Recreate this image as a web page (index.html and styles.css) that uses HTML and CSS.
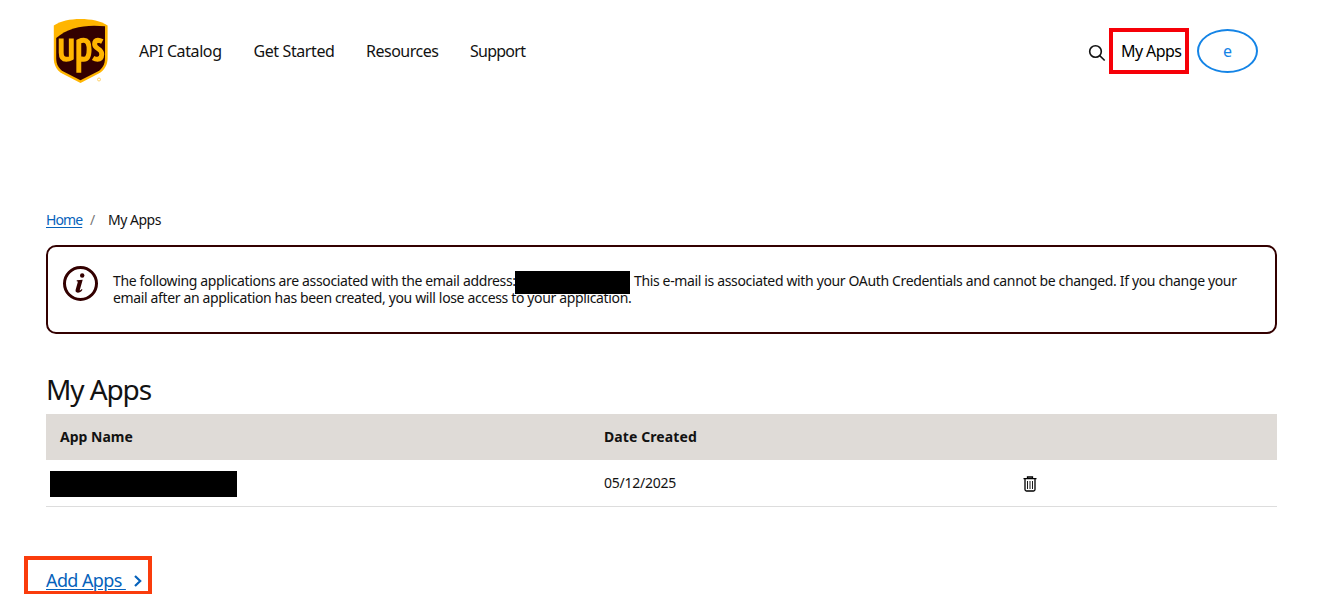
FILE: index.html
```html
<!DOCTYPE html>
<html lang="en">
<head>
<meta charset="utf-8">
<title>My Apps</title>
<link rel="stylesheet" href="styles.css">
</head>
<body>
<header class="topbar">
  <svg class="logo" width="56" height="66" viewBox="0 0 56 66" role="img" aria-label="UPS">
    <path fill="#ffb500" d="M27.500 1C17 1 7.500 3 0.800 7.500V40c0 7 2.600 12 8.400 15.600L27.500 65l18.200-9.400C51.500 52 54.600 47 54.600 40V7.500C48 3 38 1 27.500 1z"/>
    <path fill="#330000" d="M52 8.300C34 6.500 16 8.600 3.200 20V40c0 6.300 2.300 10.500 7.200 13.600L27.500 62.300l17.200-8.700C49.600 50.500 52 46.300 52 40z"/>
    <g fill="none" stroke="#ffb500" stroke-width="4.900" transform="translate(0.300 -2)">
      <path d="M7.900 22.500V36.500Q7.900 43.300 12.900 43.300Q16 43.300 18 42V22.500"/>
      <path d="M25.500 56.700V25.500Q28 24.300 30.500 24.300Q35.800 24.300 35.800 33.500Q35.800 43.300 30.500 43.300Q28 43.300 25.500 42"/>
      <path d="M49 25.500Q46.500 24.200 44.700 24.200Q41.300 24.500 41.300 28C41.300 33.500 48.500 32 48.500 38.200Q48.300 43.300 44.200 43.300Q42 43.300 39.800 42"/>
    </g>
    <circle cx="46" cy="61.500" r="1.500" fill="none" stroke="#ffd36a" stroke-width="1"/>
  </svg>
  <nav class="nav">
    <a class="nav-catalog">API Catalog</a>
    <a class="nav-start">Get Started</a>
    <a class="nav-resources">Resources</a>
    <a class="nav-support">Support</a>
  </nav>
  <div class="account">
    <svg class="search" width="18" height="18" viewBox="0 0 18 18" fill="none" stroke="#111" stroke-width="1.600"><circle cx="7.500" cy="7.500" r="5.800"/><path d="M11.700 11.700l5 4.800"/></svg>
    <a class="my-apps"><span>My Apps</span></a>
    <a class="avatar">e</a>
  </div>
</header>
<main class="page">
  <div class="crumbs"><a class="home">Home</a><span class="slash">/</span><span class="here">My Apps</span></div>
  <section class="notice">
    <svg class="info" width="36" height="36" viewBox="0 0 36 36"><circle cx="17.500" cy="17.500" r="16" fill="none" stroke="#300" stroke-width="3"/><g fill="#300" transform="translate(-.5 -.5)"><circle cx="19.700" cy="10" r="2.200"/><path d="M14.300 14.800l5.900-.6-2.900 10.200c-.2 1 .5.900 1.900-.8l.8.600c-1.500 2.200-3 3-4.700 3-2 0-2.600-1.300-2.100-3.100l2-7.200c.2-.8-.1-1.100-1.100-1.200z"/></g></svg>
    <div class="notice-text">
      <div class="line"><span class="lead">The following applications are associated with the email address:</span><span class="redacted mail"></span><span class="tail">This e-mail is associated with your OAuth Credentials and cannot be changed. If you change your</span></div>
      <div class="line second">email after an application has been created, you will lose access to your application.</div>
    </div>
  </section>
  <h1>My Apps</h1>
  <div class="row head"><span class="name"><b class="app-name">App Name</b></span><span class="date"><b class="created">Date Created</b></span></div>
  <div class="row"><span class="name"><span class="redacted app"></span></span><span class="date"><span class="day">05/12/2025</span></span>
    <svg class="trash" width="14" height="16" viewBox="0 0 14 16" fill="none" stroke="#000"><path stroke-width="1.300" d="M0.500 2.700h13M4.500 2.500V1h5v1.500M2 3v10.500q0 1.500 1.500 1.500h7q1.500 0 1.500-1.500V3"/><path stroke-width=".9" d="M4.500 5v8M7 5v8M9.500 5v8"/></svg>
  </div>
  <a class="add"><span class="add-label">Add Apps&nbsp;</span><svg class="chevron" width="10" height="14" viewBox="0 0 10 14" fill="none" stroke="#0662bb" stroke-width="2.200"><path d="M2 2l5.200 5L2 12"/></svg></a>
</main>
</body>
</html>
```
FILE: styles.css
```css
* { box-sizing: border-box; }
body { margin: 0; width: 1330px; height: 594px; overflow: hidden; background: #fff; color: #121212; font: 14px/17px "Noto Sans", sans-serif; }
span, a, b { white-space: nowrap; }
.topbar { display: flex; height: 102px; padding-left: 53px; }
.logo { margin-top: 18px; flex: none; }
.nav { display: flex; align-items: center; padding-left: 30px; font-size: 16px; letter-spacing: -.4px; }
.nav a { flex: none; }
.nav-catalog { width: 114.500px; }
.nav-start { width: 112.500px; }
.nav-resources { width: 104px; letter-spacing: -.5px; }
.nav-support { letter-spacing: -.75px; }
.account { display: flex; align-items: center; margin-left: auto; padding-right: 72px; font-size: 16px; }
.search { margin: 3px 3px 0 0; }
.my-apps { display: flex; align-items: center; width: 80px; height: 46px; padding-left: 8px; border: 4px solid #f60008; color: #000; letter-spacing: -.6px; }
.avatar { display: flex; align-items: center; justify-content: center; width: 61px; height: 44px; margin-left: 8px; border: 2px solid #1484e6; border-radius: 50%; color: #1484e6; }
.page { padding: 109px 53px 0 46px; }
.crumbs { display: flex; height: 17px; }
.home { width: 44px; color: #0662bb; text-decoration: underline; text-underline-offset: 2px; letter-spacing: -.9px; }
.slash { width: 18px; color: #777; }
.here { letter-spacing: -.5px; }
.notice { display: flex; height: 89px; margin-top: 17px; padding: 19px 0 0 15px; border: 2px solid #300; border-radius: 10px; }
.info { flex: none; }
.notice-text { padding: 6px 0 0 14px; letter-spacing: -.355px; }
.line { display: flex; height: 17px; white-space: nowrap; }
.lead { width: 402px; flex: none; }
.redacted { background: #000; flex: none; }
.mail { position: relative; width: 115px; height: 23px; margin: -1px 4px 0 0; }
h1 { height: 34px; margin: 38px 0 8px; font-size: 28px; line-height: 34px; font-weight: 400; letter-spacing: -1.100px; }
.row { display: flex; align-items: center; width: 1231px; height: 47px; border-bottom: 1px solid #ddd; }
.head { height: 46px; padding-bottom: 2px; border: 0; background: #dfdbd7; }
.name { width: 558px; padding-left: 14px; }
.app { display: block; width: 187px; height: 26px; margin: 2px 0 0 -10px; }
.date { width: 419px; }
.day { display: block; margin-top: -2px; letter-spacing: -.25px; }
.created { letter-spacing: .1px; }
.trash { margin-top: 1px; }
.add { display: flex; align-items: center; width: 128px; height: 39px; margin: 49px 0 0 -22px; padding: 8px 0 0 18px; border: 4px solid #fa3c0c; color: #0662bb; font-size: 18px; line-height: 22px; }
.add-label { width: 87px; text-decoration: underline; text-underline-offset: 2px; letter-spacing: -.6px; }
.chevron { margin-top: 2px; }
```
